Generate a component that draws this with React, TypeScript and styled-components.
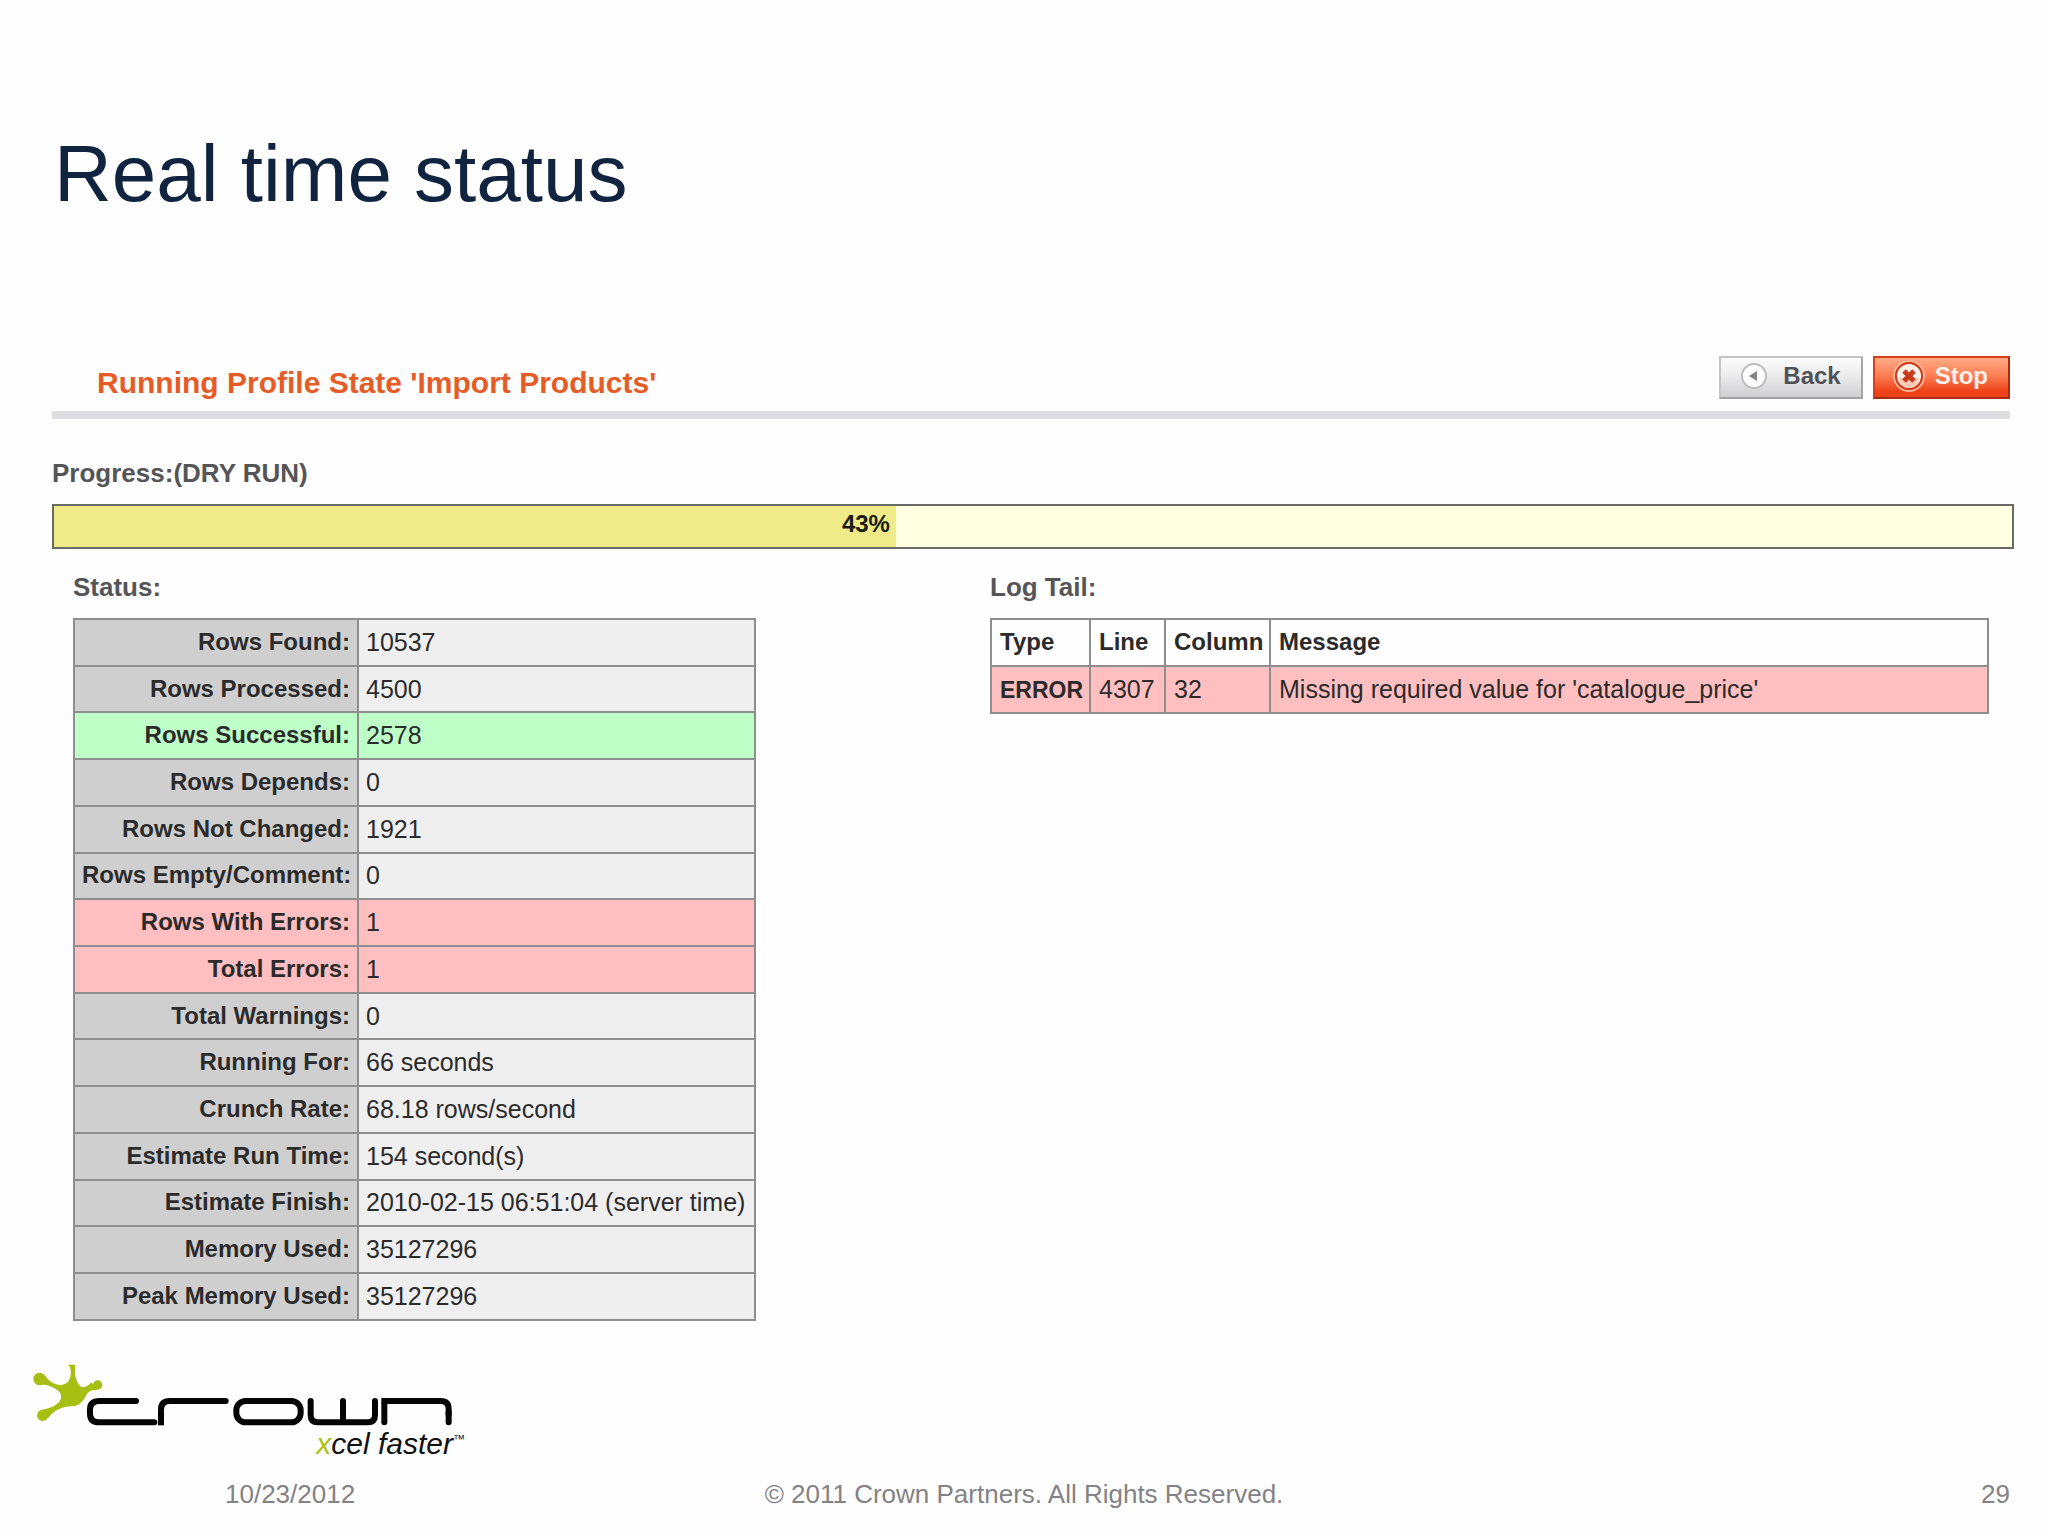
import React from "react";
import styled, { createGlobalStyle, css } from "styled-components";

const GlobalStyle = createGlobalStyle`
  *, *::before, *::after { box-sizing: border-box; }
  body {
    margin: 0;
    background: #fefefe;
    font-family: "Liberation Sans", Arial, sans-serif;
    color: #2b2b2b;
  }
`;

type Tone = "plain" | "success" | "error";

const toneColors: Record<Tone, { label: string; value: string }> = {
  plain: { label: "#d0cfd0", value: "#f0eff0" },
  success: { label: "#beffc7", value: "#beffc7" },
  error: { label: "#ffbfc1", value: "#ffbfc1" },
};

const Slide = styled.div`
  display: flex;
  flex-direction: column;
  padding: 128px 0 26px;
`;

const Content = styled.main`
  padding: 0 34px 0 52px;
`;

const SlideTitle = styled.h1`
  margin: 0 0 136px;
  padding-left: 2px;
  font-size: 80px;
  line-height: 92px;
  font-weight: 400;
  color: #10233f;
`;

const Toolbar = styled.header`
  display: flex;
  justify-content: space-between;
  align-items: flex-end;
  margin-right: 4px;
  padding: 0 0 12px 45px;
  border-bottom: 8px solid #dedddf;
`;

const ToolbarTitle = styled.h2`
  margin: 0;
  font-size: 30px;
  line-height: 32px;
  font-weight: 700;
  color: #e65c26;
`;

const Actions = styled.div`
  display: flex;
  gap: 10px;
`;

const backSkin = css`
  padding: 0 20px 3px 20px;
  gap: 16px;
  color: #505257;
  border-color: #c4c4c6 #a6a6a8 #a2a2a4 #c4c4c6;
  background: linear-gradient(#fbfbfb, #ececed 45%, #cfcfd1);
`;

const stopSkin = css`
  padding: 0 20px 3px 18px;
  gap: 10px;
  color: #fff1ea;
  border-color: #d8401c #a82c10 #a82c10 #d8401c;
  background: linear-gradient(#ffab86, #fb7f55 45%, #ee4319 85%);
`;

const ActionButton = styled.button<{ $danger?: boolean }>`
  display: flex;
  align-items: center;
  height: 43px;
  border: 2px solid;
  font-family: inherit;
  font-size: 24px;
  line-height: 28px;
  font-weight: 700;
  cursor: pointer;
  ${({ $danger }) => ($danger ? stopSkin : backSkin)}
`;

const SectionLabel = styled.h3`
  margin: 0;
  font-size: 26px;
  line-height: 30px;
  font-weight: 700;
  color: #555558;
`;

const ProgressSection = styled.section`
  display: grid;
  gap: 16px;
  margin-top: 39px;
`;

const ProgressTrack = styled.div`
  height: 45px;
  border: 2px solid #6b6b66;
  background: #ffffe2;
`;

const ProgressFill = styled.div`
  height: 100%;
  padding: 4px 6px 0 0;
  background: #eeeb88;
  color: #1c1c14;
  font-size: 24px;
  line-height: 28px;
  font-weight: 700;
  text-align: right;
`;

const Panels = styled.div`
  display: grid;
  grid-template-columns: 917fr 999fr;
  padding: 23px 25px 0 21px;
`;

const Panel = styled.section`
  display: flex;
  flex-direction: column;
  align-items: flex-start;
  gap: 16px;
  min-width: 0;
`;

const gridLines = css`
  border-collapse: collapse;
  table-layout: fixed;
  white-space: nowrap;
  th, td {
    border: 2px solid #8e8e8f;
    text-align: left;
    line-height: 28px;
  }
  th { font-size: 24px; font-weight: 700; }
  td { font-size: 25px; }
`;

const StatusTable = styled.table`
  ${gridLines}
  width: 683px;
  height: 703px;
  th, td { padding: 0 7px 1px; }
`;

const LogTable = styled.table`
  ${gridLines}
  width: 100%;
  th, td { height: 47px; padding: 0 0 1px 8px; }
`;

const StatusRow = styled.tr<{ $tone: Tone }>`
  th { background: ${({ $tone }) => toneColors[$tone].label}; text-align: right; }
  td { background: ${({ $tone }) => toneColors[$tone].value}; }
`;

const LogRow = styled.tr`
  background: ${toneColors.error.value};
`;

const LogType = styled.strong`
  font-size: 23px;
`;

const Col = styled.col<{ $width?: number }>`
  width: ${({ $width }) => ($width ? `${$width}px` : "auto")};
`;

const Footer = styled.footer`
  margin-top: 43px;
`;

const Brand = styled.div`
  display: flex;
  flex-direction: column;
  width: 432px;
  margin-left: 33px;
`;

const Tagline = styled.p`
  margin: 0;
  font-size: 30px;
  line-height: 36px;
  font-style: italic;
  text-align: right;
  color: #111;
`;

const Accent = styled.span`
  color: #a9c417;
`;

const Trademark = styled.sup`
  font-size: 12px;
  line-height: 1px;
  font-style: normal;
`;

const Meta = styled.div`
  display: grid;
  grid-template-columns: 1fr auto 1fr;
  margin-top: 17px;
  padding: 0 38px;
  font-size: 26px;
  line-height: 30px;
  color: #838285;
`;

const MetaDate = styled.time`
  padding-left: 187px;
`;

const PageNumber = styled.span`
  text-align: right;
`;

const statusRows: { label: string; value: string; tone?: Tone }[] = [
  { label: "Rows Found:", value: "10537" },
  { label: "Rows Processed:", value: "4500" },
  { label: "Rows Successful:", value: "2578", tone: "success" },
  { label: "Rows Depends:", value: "0" },
  { label: "Rows Not Changed:", value: "1921" },
  { label: "Rows Empty/Comment:", value: "0" },
  { label: "Rows With Errors:", value: "1", tone: "error" },
  { label: "Total Errors:", value: "1", tone: "error" },
  { label: "Total Warnings:", value: "0" },
  { label: "Running For:", value: "66 seconds" },
  { label: "Crunch Rate:", value: "68.18 rows/second" },
  { label: "Estimate Run Time:", value: "154 second(s)" },
  { label: "Estimate Finish:", value: "2010-02-15 06:51:04 (server time)" },
  { label: "Memory Used:", value: "35127296" },
  { label: "Peak Memory Used:", value: "35127296" },
];

const logEntries = [
  { type: "ERROR", line: 4307, column: 32, message: "Missing required value for 'catalogue_price'" },
];

const progress = 43;

const BackIcon = () => (
  <svg width="26" height="26" viewBox="0 0 26 26" aria-hidden="true">
    <circle cx="13" cy="13" r="12" fill="#fdfdfd" stroke="#bdbdbf" strokeWidth="2" />
    <path d="M16 8 V18 L8 13 Z" fill="#858587" />
  </svg>
);

const StopIcon = () => (
  <svg width="32" height="32" viewBox="0 0 32 32" aria-hidden="true">
    <circle cx="16" cy="16" r="15" fill="none" stroke="#ffb598" strokeWidth="2" />
    <circle cx="16" cy="16" r="13" fill="#fff0e8" stroke="#cf3c1a" strokeWidth="2" />
    <path d="M6 18 A10 10 0 0 0 26 18 Z" fill="#ffc9b6" />
    <path d="M11 11 L21 21 M21 11 L11 21" stroke="#c93a1c" strokeWidth="5" />
  </svg>
);

const CrownMark = () => (
  <svg width="420" height="62" viewBox="39 45 1260 186" role="img" aria-label="Crown">
    <g fill="#a6bf12">
      <path d="M142 47 H166 C163 66 164 92 180 110 C188 118 200 116 214 100 L232 123 C214 122 203 128 198 140 C190 156 178 168 164 171 C130 171 102 182 84 208 L60 183 C90 180 118 168 123 148 C126 130 112 120 94 113 C84 109 76 106 68 108 L74 78 C84 96 104 108 124 108 C148 106 154 84 152 64 C151 54 148 49 142 47 Z" />
      <circle cx="59" cy="90" r="19" />
      <circle cx="68" cy="199" r="17" />
      <circle cx="233" cy="108" r="14" />
    </g>
    <g fill="none" stroke="#050505" strokeWidth="18" strokeLinecap="round">
      <path d="M348 156 H238 Q210 156 210 182 V194 Q210 220 238 220 H403" />
      <path d="M423 213 V182 Q423 156 449 156 H617" />
      <path d="M423 229 V200" strokeLinecap="butt" />
      <rect x="649" y="156" width="193" height="64" rx="28" />
      <path d="M872 156 V198 Q872 220 894 220 H1043 Q1065 220 1065 198 V156 M969 156 V216" />
      <path d="M1093 220 V165" />
      <path d="M1084 156 H1262 Q1286 156 1286 180 V200" strokeLinecap="butt" />
      <path d="M1286 190 V220" />
    </g>
  </svg>
);

export default function App() {
  return (
    <>
      <GlobalStyle />
      <Slide>
        <Content>
          <SlideTitle>Real time status</SlideTitle>
          <Toolbar>
            <ToolbarTitle>Running Profile State 'Import Products'</ToolbarTitle>
            <Actions>
              <ActionButton type="button">
                <BackIcon />
                Back
              </ActionButton>
              <ActionButton type="button" $danger>
                <StopIcon />
                Stop
              </ActionButton>
            </Actions>
          </Toolbar>

          <ProgressSection>
            <SectionLabel id="progress-label">Progress:(DRY RUN)</SectionLabel>
            <ProgressTrack
              role="progressbar"
              aria-labelledby="progress-label"
              aria-valuemin={0}
              aria-valuemax={100}
              aria-valuenow={progress}
            >
              <ProgressFill style={{ width: `${progress}%` }}>{progress}%</ProgressFill>
            </ProgressTrack>
          </ProgressSection>

          <Panels>
            <Panel>
              <SectionLabel id="status-label">Status:</SectionLabel>
              <StatusTable aria-labelledby="status-label">
                <colgroup>
                  <Col $width={284} />
                  <Col />
                </colgroup>
                <tbody>
                  {statusRows.map(({ label, value, tone = "plain" }) => (
                    <StatusRow key={label} $tone={tone}>
                      <th scope="row">{label}</th>
                      <td>{value}</td>
                    </StatusRow>
                  ))}
                </tbody>
              </StatusTable>
            </Panel>

            <Panel>
              <SectionLabel id="log-label">Log Tail:</SectionLabel>
              <LogTable aria-labelledby="log-label">
                <colgroup>
                  <Col $width={99} />
                  <Col $width={75} />
                  <Col $width={105} />
                  <Col />
                </colgroup>
                <thead>
                  <tr>
                    <th scope="col">Type</th>
                    <th scope="col">Line</th>
                    <th scope="col">Column</th>
                    <th scope="col">Message</th>
                  </tr>
                </thead>
                <tbody>
                  {logEntries.map((entry) => (
                    <LogRow key={entry.line}>
                      <td><LogType>{entry.type}</LogType></td>
                      <td>{entry.line}</td>
                      <td>{entry.column}</td>
                      <td>{entry.message}</td>
                    </LogRow>
                  ))}
                </tbody>
              </LogTable>
            </Panel>
          </Panels>
        </Content>

        <Footer>
          <Brand>
            <CrownMark />
            <Tagline>
              <Accent>x</Accent>cel faster<Trademark>™</Trademark>
            </Tagline>
          </Brand>
          <Meta>
            <MetaDate dateTime="2012-10-23">10/23/2012</MetaDate>
            <span>© 2011 Crown Partners. All Rights Reserved.</span>
            <PageNumber>29</PageNumber>
          </Meta>
        </Footer>
      </Slide>
    </>
  );
}
